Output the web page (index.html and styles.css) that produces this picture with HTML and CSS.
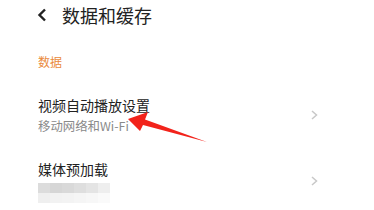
FILE: index.html
```html
<!DOCTYPE html>
<html lang="zh-CN">
    <head>
        <meta charset="UTF-8">
        <title>数据和缓存</title>
        <link rel="stylesheet" href="styles.css">
    </head>
    <body>
        <div class="page">
            <div class="hd">
                <svg class="back" width="10" height="14" viewBox="0 0 10 14">
                    <path d="M8 1.5 L2.5 7 L8 12.5" fill="none" stroke="#222" stroke-width="2.4"/>
                </svg>
                <div class="hd_title">数据和缓存</div>
            </div>
            <div class="label">数据</div>
            <div class="item item1">
                <div class="item_txt">
                    <div class="item_title">视频自动播放设置</div>
                    <div class="item_sub">移动网络和Wi-Fi</div>
                </div>
                <svg class="more" width="7" height="10" viewBox="0 0 7 10">
                    <path d="M1 1 L5.5 5 L1 9" fill="none" stroke="#c8c8c8" stroke-width="1.5"/>
                </svg>
            </div>
            <div class="item item2">
                <div class="item_txt">
                    <div class="item_title">媒体预加载</div>
                    <div class="mosaic">
                        <i style="background:#dcdcdc"></i><i style="background:#d6d6d6"></i><i style="background:#d9d9d9"></i><i style="background:#dedede"></i><i style="background:#e4e4e4"></i><i style="background:#eeeeee"></i>
                        <i style="background:#efefef"></i><i style="background:#f2f2f2"></i><i style="background:#f3f3f3"></i><i style="background:#f5f5f5"></i><i style="background:#f7f7f7"></i><i style="background:#fafafa"></i>
                    </div>
                </div>
                <svg class="more" width="7" height="10" viewBox="0 0 7 10">
                    <path d="M1 1 L5.5 5 L1 9" fill="none" stroke="#c8c8c8" stroke-width="1.5"/>
                </svg>
            </div>
            <!-- 红色标注箭头 -->
            <svg class="arrow" width="374" height="210" viewBox="0 0 374 210">
                <polygon points="128,119 148,112 145,119.5 207,142 143,125 140,131" fill="#f2231b"/>
            </svg>
        </div>
    </body>
</html>
```

FILE: styles.css
```css
body {
    margin: 0;
    background: #fff;
}
.page {
    position: relative;
    width: 374px;
    height: 210px;
    overflow: hidden;
    padding: 0 56px 0 38px;
    box-sizing: border-box;
    font-family: "Noto Sans CJK SC", "Noto Sans", sans-serif;
}
.hd {
    height: 30px;
    display: flex;
    align-items: center;
    margin-left: -1px;
}
.back {
    display: block;
}
.hd_title {
    margin-left: 15px;
    font-size: 18px;
    line-height: 30px;
    color: #222;
}
.label {
    margin-top: 24px;
    font-size: 12px;
    line-height: 16px;
    color: #ea8a3c;
}
.item {
    display: flex;
    align-items: center;
    justify-content: space-between;
}
.item1 {
    margin-top: 25px;
}
.item2 {
    margin-top: 25px;
}
.item_title {
    font-size: 14px;
    line-height: 20px;
    color: #222;
}
.item_sub {
    margin-top: 3px;
    font-size: 12.4px;
    line-height: 16px;
    color: #8a8a8a;
}
.mosaic {
    margin-top: 4px;
    display: grid;
    grid-template-columns: repeat(6, 12px);
    grid-template-rows: 10px 10px;
}
.mosaic i {
    display: block;
}
.more {
    display: block;
}
.arrow {
    position: absolute;
    left: 0;
    top: 0;
}
```
